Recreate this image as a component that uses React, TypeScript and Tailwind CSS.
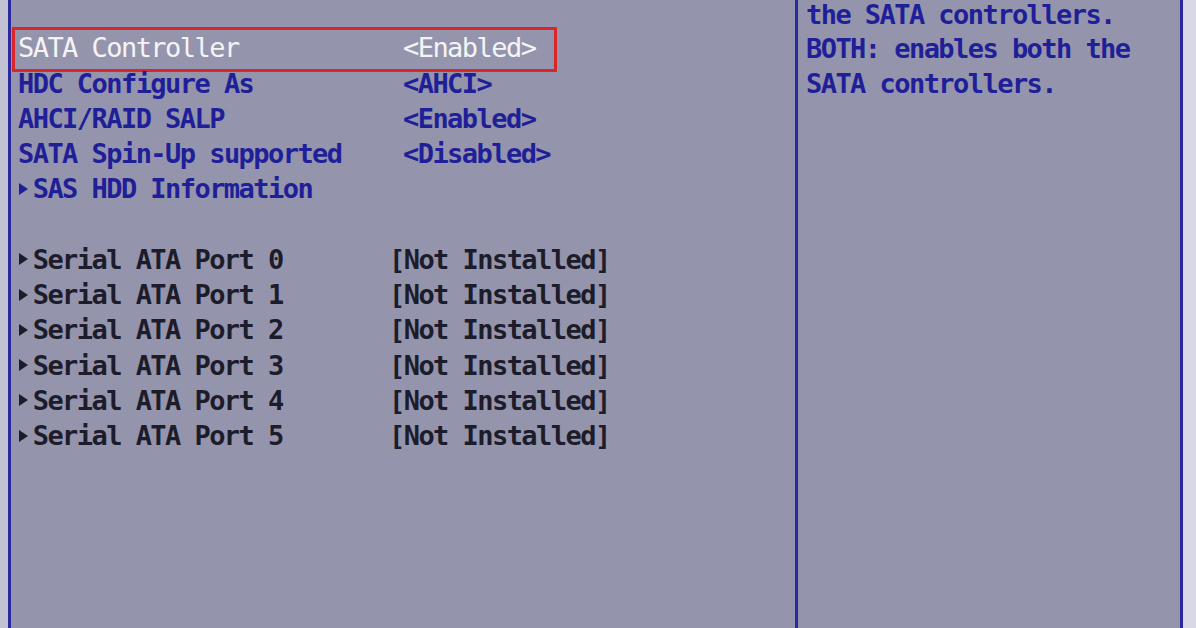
import React from "react";

const FONT = { fontFamily: '"DejaVu Sans Mono", "Liberation Mono", monospace' };

function Arrow({ color }: { color: string }) {
  return (
    <span className="inline-flex w-[14.7px] items-center justify-start">
      <svg width="11" height="14" viewBox="0 0 11 14">
        <polygon points="1,1 10,7 1,13" fill={color} />
      </svg>
    </span>
  );
}

type Row = {
  name: string;
  value?: string;
  arrow?: boolean;
  tone: "white" | "blue" | "dark";
  nameW: string;
  selected?: boolean;
};

const rows: (Row | null)[] = [
  { name: "SATA Controller", value: "<Enabled>", tone: "white", nameW: "w-[385px]", selected: true },
  { name: "HDC Configure As", value: "<AHCI>", tone: "blue", nameW: "w-[385px]" },
  { name: "AHCI/RAID SALP", value: "<Enabled>", tone: "blue", nameW: "w-[385px]" },
  { name: "SATA Spin-Up supported", value: "<Disabled>", tone: "blue", nameW: "w-[385px]" },
  { name: "SAS HDD Information", arrow: true, tone: "blue", nameW: "w-[385px]" },
  null,
  ...[0, 1, 2, 3, 4, 5].map(
    (i): Row => ({
      name: `Serial ATA Port ${i}`,
      value: "[Not Installed]",
      arrow: true,
      tone: "dark",
      nameW: "w-[371px]",
    })
  ),
];

const toneClass = {
  white: "text-[#f4f4f6] font-normal",
  blue: "text-[#1f1f98] font-bold",
  dark: "text-[#1c1c2a] font-bold",
};
const toneHex = { white: "#f4f4f6", blue: "#1f1f98", dark: "#1c1c2a" };

export default function App() {
  return (
    <div
      className="flex h-[628px] w-[1196px] overflow-hidden bg-[#9594ad] text-[27px] tracking-[-1.55px]"
      style={FONT}
    >
      <div className="w-[8px] shrink-0 bg-[#c2c2d4]" />
      <div className="flex flex-1 border-x-[3px] border-[#2a2a9c]">
        <div className="w-[787px] shrink-0 border-r-[3px] border-[#2a2a9c] pt-[30.3px]">
          {rows.map((r, idx) =>
            r === null ? (
              <div key={idx} className="h-[35.25px]" />
            ) : (
              <div
                key={idx}
                className={`relative flex h-[35.25px] items-center whitespace-pre pl-[7px] leading-[35.25px] ${toneClass[r.tone]}`}
              >
                {r.selected && (
                  <span className="pointer-events-none absolute left-[1px] top-[-3.5px] h-[45px] w-[545px] border-[3px] border-[#d8262a]" />
                )}
                <span className={`flex shrink-0 items-center ${r.nameW}`}>
                  {r.arrow && <Arrow color={toneHex[r.tone]} />}
                  <span>{r.name}</span>
                </span>
                {r.value && <span>{r.value}</span>}
              </div>
            )
          )}
        </div>
        <div className="flex-1 pl-[8px] font-bold text-[#1f1f98]">
          <div className="-mt-[2.5px] flex flex-col">
            {["the SATA controllers.", "BOTH: enables both the", "SATA controllers."].map((t) => (
              <div key={t} className="h-[34.5px] whitespace-pre leading-[34.5px]">
                {t}
              </div>
            ))}
          </div>
        </div>
      </div>
      <div className="w-[13px] shrink-0 bg-[#d8d8e6]" />
    </div>
  );
}
